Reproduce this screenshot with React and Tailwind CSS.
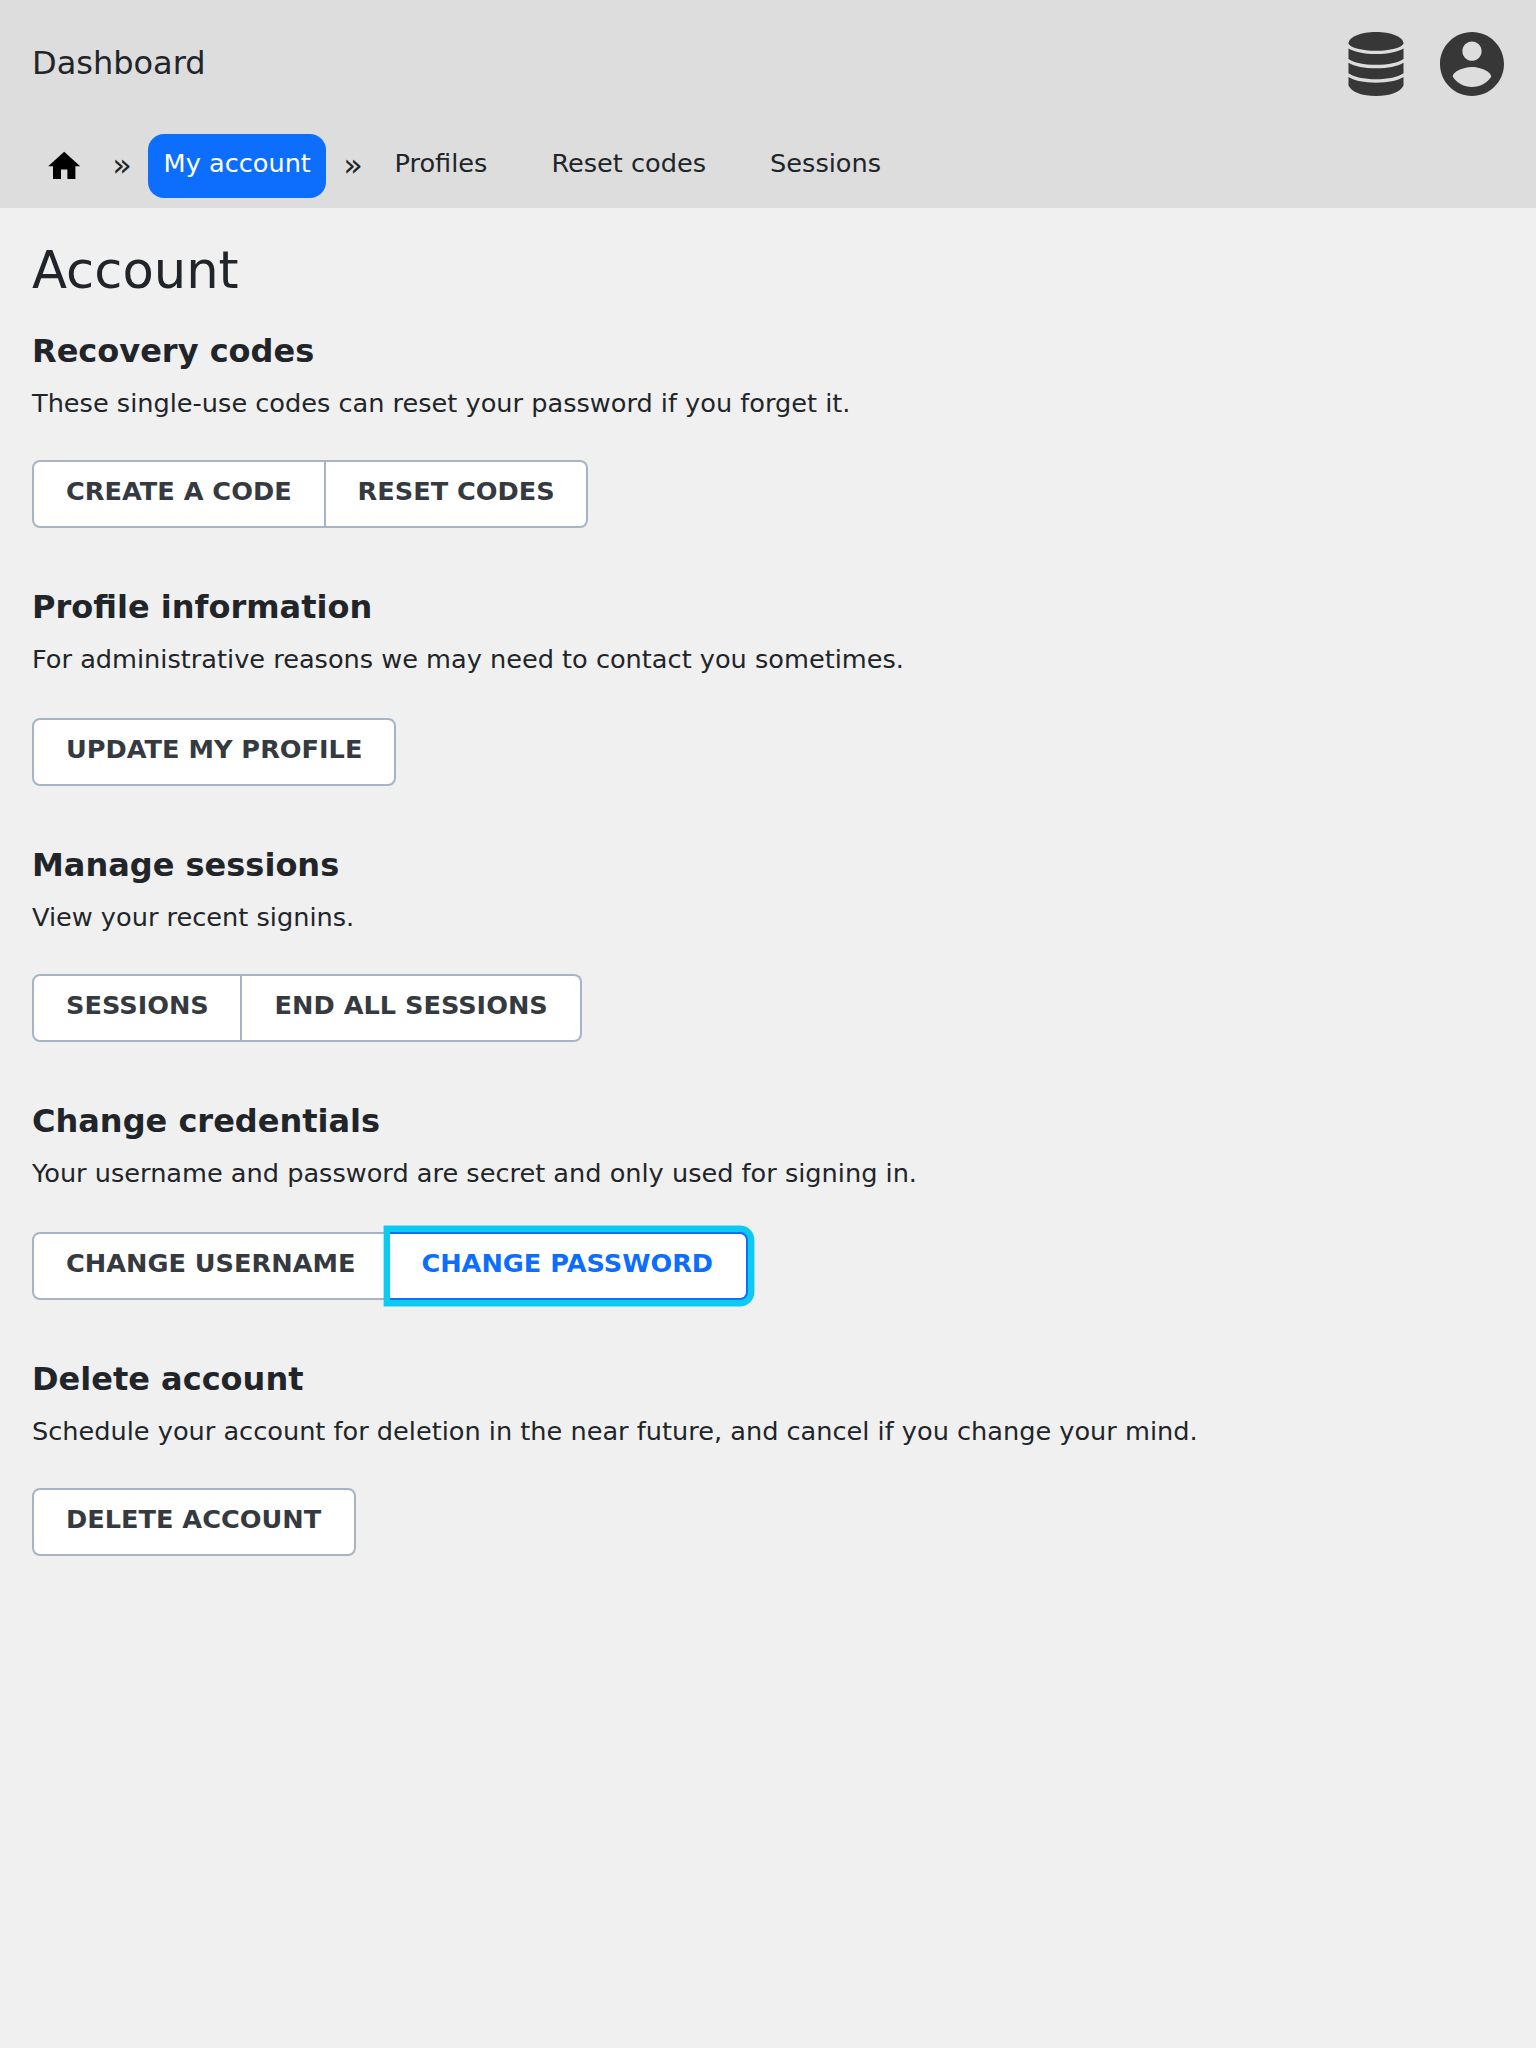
const ACCOUNT_SECTIONS = [
  {
    title: "Recovery codes",
    text: "These single-use codes can reset your password if you forget it.",
    gap: "mt-[38px]",
    actions: [
      { label: "Create a code", width: "w-[294px]" },
      { label: "Reset codes", width: "w-[262px]", indent: "pl-[31.6px]" },
    ],
  },
  {
    title: "Profile information",
    text: "For administrative reasons we may need to contact you sometimes.",
    gap: "mt-10",
    actions: [{ label: "Update my profile", width: "w-[364px]" }],
  },
  {
    title: "Manage sessions",
    text: "View your recent signins.",
    gap: "mt-[38px]",
    actions: [
      { label: "Sessions", width: "w-[210px]" },
      { label: "End all sessions", width: "w-[340px]", indent: "pl-[32.6px]" },
    ],
  },
  {
    title: "Change credentials",
    text: "Your username and password are secret and only used for signing in.",
    gap: "mt-10",
    actions: [
      { label: "Change username", width: "w-[358px]" },
      { label: "Change password", width: "w-[358px]", indent: "pl-[31.4px]", focused: true },
    ],
  },
  {
    title: "Delete account",
    text: "Schedule your account for deletion in the near future, and cancel if you change your mind.",
    gap: "mt-[38px]",
    actions: [{ label: "Delete account", width: "w-[324px]" }],
  },
];

function DatabaseIcon() {
  return (
    <svg className="h-16 w-14" viewBox="-0.5 0 57 64" preserveAspectRatio="none" fill="currentColor" aria-hidden="true">
      <path d="M28 0C43 0 55.5 4.5 56 11.5C54.5 15.8 42 18.8 28 18.8S1.5 15.8 0 11.5C.5 4.5 13 0 28 0Z" />
      <path d="M0 16.5C6 20 16 22 28 22S50 20 56 16.5V27C51 30.7 40 32.8 28 32.8S5 30.7 0 27Z" />
      <path d="M0 30.7C6 34.3 16 36.3 28 36.3S50 34.3 56 30.7V41.3C51 45 40 47.3 28 47.3S5 45 0 41.3Z" />
      <path d="M0 45C6 48.6 16 50.7 28 50.7S50 48.6 56 45V53.5C53 60 42 64 28 64S3 60 0 53.5Z" />
    </svg>
  );
}

function AccountIcon() {
  return (
    <svg className="size-16" viewBox="2 2 20 20" fill="currentColor" aria-hidden="true">
      <path d="M12 2C6.48 2 2 6.48 2 12s4.48 10 10 10 10-4.48 10-10S17.52 2 12 2zm0 3c1.66 0 3 1.34 3 3s-1.34 3-3 3-3-1.34-3-3 1.34-3 3-3zm0 14.2c-2.5 0-4.71-1.28-6-3.22.03-1.99 4-3.08 6-3.08 1.99 0 5.97 1.09 6 3.08-1.29 1.94-3.5 3.22-6 3.22z" />
    </svg>
  );
}

function HomeIcon() {
  return (
    <svg className="size-[38.4px] text-black" viewBox="0 0 24 24" fill="currentColor" aria-hidden="true">
      <path d="M10 20v-6h4v6h5v-8h3L12 3 2 12h3v8z" />
    </svg>
  );
}

function Separator() {
  return <span className="w-5 pt-[7px] text-center text-[32px] leading-[48px]">»</span>;
}

function NavLink({ children }) {
  return (
    <a className="px-8 pt-[10px] leading-[38px] whitespace-nowrap" href="#">
      {children}
    </a>
  );
}

function Action({ label, width, indent = "pl-8", focused }) {
  const tone = focused
    ? "relative border-[#0d6efd] text-[#0d6efd] shadow-[0_0_0_6.4px_#0dcaf0]"
    : "border-[#a7b4c3] text-[#343a40]";
  return (
    <button
      className={`${width} ${indent} ${tone} h-[68px] border-2 border-l-0 bg-white pb-1.5 text-left font-bold whitespace-nowrap uppercase first:rounded-l-lg first:border-l-2 last:rounded-r-lg`}
    >
      {label}
    </button>
  );
}

export default function App() {
  return (
    <div className="min-h-[2048px] bg-[#f0f0f0] font-['DejaVu_Sans',sans-serif] text-[25.6px] leading-[38px] text-[#212529]">
      <header className="h-52 bg-[#dddddd]">
        <div className="flex h-32 items-center justify-between px-8">
          <span className="pb-0.5 text-[32px] leading-[48px]">Dashboard</span>
          <div className="flex gap-9 text-[#373737]">
            <DatabaseIcon />
            <AccountIcon />
          </div>
        </div>
        <nav className="flex items-start pt-1.5 pl-[45px]">
          <a className="mr-[28.6px] pt-[13.4px]" href="#">
            <HomeIcon />
          </a>
          <Separator />
          <a
            className="mr-[17px] ml-4 h-16 w-[178px] rounded-2xl bg-[#0d6efd] pt-[10px] pl-[15.6px] leading-[38px] whitespace-nowrap text-white"
            href="#"
          >
            My account
          </a>
          <Separator />
          <div className="-ml-[0.5px] flex">
            <NavLink>Profiles</NavLink>
            <NavLink>Reset codes</NavLink>
            <NavLink>Sessions</NavLink>
          </div>
        </nav>
      </header>
      <main className="px-8 pt-8">
        <h1 className="text-[51.2px] leading-[60px]">Account</h1>
        {ACCOUNT_SECTIONS.map((section) => (
          <section key={section.title} className="mb-7 pt-[27px]">
            <h2 className="text-[32px] leading-[48px] font-bold">{section.title}</h2>
            <p className="mt-[9px] leading-[38px]">{section.text}</p>
            <div className={`flex ${section.gap}`}>
              {section.actions.map((action) => (
                <Action key={action.label} {...action} />
              ))}
            </div>
          </section>
        ))}
      </main>
    </div>
  );
}
